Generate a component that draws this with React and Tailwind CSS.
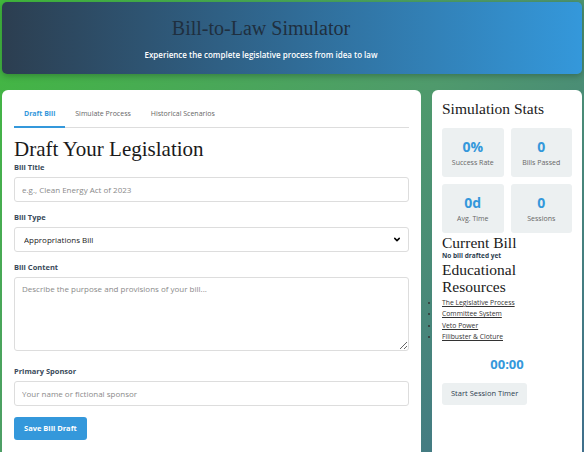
import { ChevronDown } from "lucide-react";

const serif = "font-['Liberation_Serif',serif]";

function Field({ label, children, className = "mb-[10px]" }) {
  return (
    <div className={className}>
      <label className="block text-[7.5px] leading-[10px] font-bold text-[#3a4a5a] mb-[5px]">{label}</label>
      {children}
    </div>
  );
}

function Stat({ value, label }) {
  return (
    <div className="bg-[#ecf0f1] rounded-[3px] h-[49px] flex flex-col items-center justify-center">
      <div className="text-[14px] leading-[18px] font-bold text-[#3498db]">{value}</div>
      <div className="text-[7px] leading-[10px] text-[#666] mt-[2px]">{label}</div>
    </div>
  );
}

export default function App() {
  const tabs = ["Draft Bill", "Simulate Process", "Historical Scenarios"];
  const resources = ["The Legislative Process", "Committee System", "Veto Power", "Filibuster & Cloture"];

  return (
    <div className="h-[452px] overflow-hidden p-[2px] font-['Open_Sans',sans-serif] bg-[linear-gradient(135deg,#41ba3d_0%,#4f9a6c_50%,#3f6f8c_100%)]">
      <header className="h-[72px] rounded-[5px] bg-[linear-gradient(90deg,#2c3e50,#3498db)] shadow-[0_2px_6px_rgba(0,0,0,0.25)] flex flex-col items-center pt-[14px] pr-[62px]">
        <h1 className={`${serif} text-[20px] leading-[24px] text-[#1f2f3f]`}>Bill-to-Law Simulator</h1>
        <p className="text-[8px] leading-[12px] font-semibold text-white mt-[9px]">Experience the complete legislative process from idea to law</p>
      </header>

      <div className="flex gap-[11px] mt-[16px]">
        <main className="w-[419px] h-[400px] bg-white rounded-[6px] p-[12px]">
          <div className="flex border-b border-[#ddd]">
            {tabs.map((t, i) => (
              <div
                key={t}
                className={`px-[10px] py-[7px] text-[7px] leading-[10px] mb-[-1px] border-b-2 ${
                  i === 0 ? "border-[#3498db] text-[#3498db] font-bold" : "border-transparent text-[#666]"
                }`}
              >
                {t}
              </div>
            ))}
          </div>

          <h2 className={`${serif} text-[21px] leading-[26px] text-[#1a1a1a] mt-[8px]`}>Draft Your Legislation</h2>

          <Field label="Bill Title">
            <input
              className="block w-full h-[25px] border border-[#ddd] rounded-[3px] px-[7px] text-[8px] text-[#333] placeholder:text-[#8a8a8a] outline-none"
              placeholder="e.g., Clean Energy Act of 2023"
            />
          </Field>

          <Field label="Bill Type">
            <div className="relative">
              <select className="block appearance-none w-full h-[25px] border border-[#ddd] rounded-[3px] px-[9px] text-[8px] text-[#222] bg-white outline-none">
                <option>Appropriations Bill</option>
              </select>
              <ChevronDown className="absolute right-[7px] top-[8px] w-[10px] h-[9px] text-black pointer-events-none" strokeWidth={4} />
            </div>
          </Field>

          <Field label="Bill Content" className="mb-[15px]">
            <textarea
              className="block w-full h-[74px] border border-[#ddd] rounded-[3px] px-[7px] py-[5px] text-[8px] text-[#333] placeholder:text-[#8a8a8a] outline-none"
              placeholder="Describe the purpose and provisions of your bill..."
            />
          </Field>

          <Field label="Primary Sponsor" className="mb-[11px]">
            <input
              className="block w-full h-[25px] border border-[#ddd] rounded-[3px] px-[7px] text-[8px] text-[#333] placeholder:text-[#8a8a8a] outline-none"
              placeholder="Your name or fictional sponsor"
            />
          </Field>

          <button className="block h-[23px] px-[10px] rounded-[3px] bg-[#3498db] text-white text-[7.5px] font-bold">Save Bill Draft</button>
        </main>

        <aside className="w-[150px] h-[400px] bg-white rounded-[6px] p-[10px] pt-[9px]">
          <h3 className={`${serif} text-[15.5px] leading-[20px] text-[#1a1a1a] mb-[9px]`}>Simulation Stats</h3>
          <div className="grid grid-cols-2 gap-[7px]">
            <Stat value="0%" label="Success Rate" />
            <Stat value="0" label="Bills Passed" />
            <Stat value="0d" label="Avg. Time" />
            <Stat value="0" label="Sessions" />
          </div>

          <h3 className={`${serif} text-[15.5px] leading-[17px] text-[#1a1a1a] mt-[1px]`}>Current Bill</h3>
          <p className="text-[6.5px] leading-[10px] font-bold text-[#2c3e50]">No bill drafted yet</p>

          <h3 className={`${serif} text-[15.5px] leading-[17px] text-[#1a1a1a]`}>Educational Resources</h3>
          <ul className="list-disc -ml-[3px] mt-[2px] text-[6.8px] leading-[11.4px] text-[#333]">
            {resources.map((r) => (
              <li key={r}>
                <a href="#" className="underline ml-[3px]">{r}</a>
              </li>
            ))}
          </ul>

          <div className="text-center text-[13px] leading-[18px] font-bold text-[#3498db] mt-[12px]">00:00</div>

          <button className="block mt-[10px] h-[22px] px-[9px] rounded-[3px] bg-[#ecf0f1] text-[7.5px] text-[#2c3e50]">Start Session Timer</button>
        </aside>
      </div>
    </div>
  );
}
